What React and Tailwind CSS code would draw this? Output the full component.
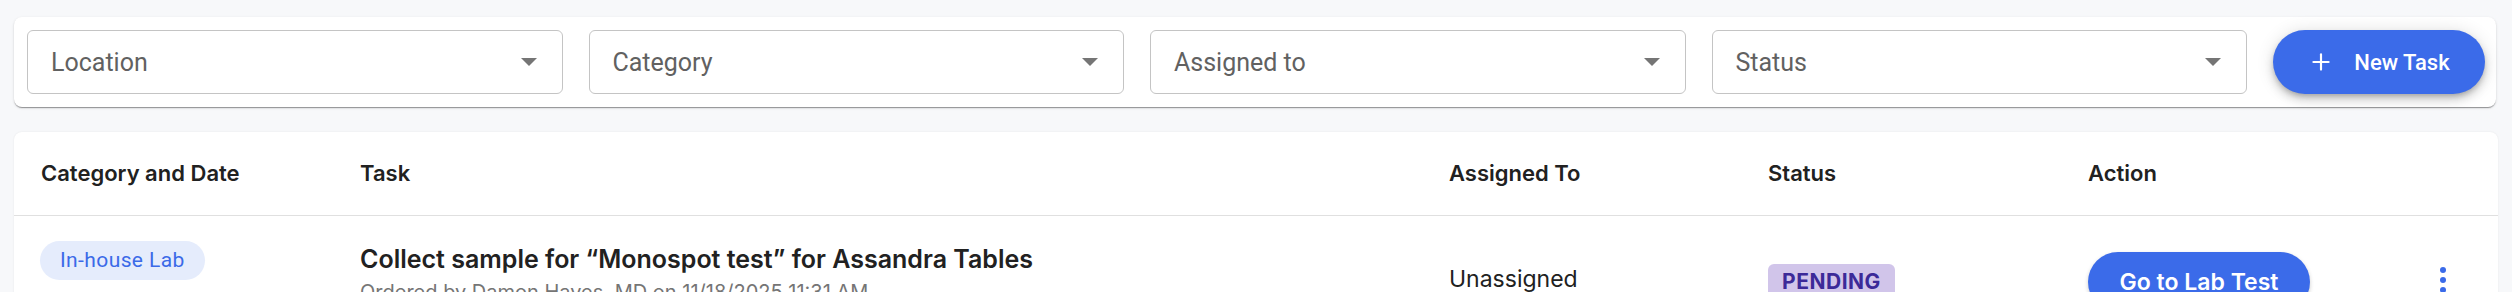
import { Plus } from "lucide-react";

const filters = ["Location", "Category", "Assigned to", "Status"];

function FilterSelect({ label }) {
  return (
    <button
      type="button"
      className="flex h-16 min-w-0 flex-1 items-center justify-between rounded-[6px] border border-[#c4c4c4] bg-white pl-[23px] pr-[25px] text-left"
    >
      <span className="text-[25px] leading-none text-[#616161] [font-family:Roboto,'Liberation_Sans',sans-serif]">
        {label}
      </span>
      <svg width="16" height="8" viewBox="0 0 16 8" className="shrink-0">
        <path d="M0 0 L16 0 L8 8 Z" fill="#757575" />
      </svg>
    </button>
  );
}

function TaskRow() {
  return (
    <div className="flex h-[132px] items-start">
      <div className="w-[346px] shrink-0 pl-[26px] pt-[25px]">
        <span className="inline-flex h-[39px] items-center rounded-full bg-[#e5ecfc] px-5 text-[21px] tracking-[0.4px] text-[#3b6ae8] [font-family:Roboto,'Liberation_Sans',sans-serif]">
          In-house Lab
        </span>
      </div>

      <div className="w-[1089px] shrink-0 pt-[27px]">
        <p className="text-[25px] font-semibold leading-8 text-[#212121]">
          Collect sample for “Monospot test” for Assandra Tables
        </p>
        <p className="mt-[3px] text-[20px] leading-7 text-[#757575]">
          Ordered by Damon Hayes, MD on 11/18/2025 11:31 AM
        </p>
      </div>

      <div className="w-[319px] shrink-0 pt-[47px]">
        <p className="text-[23px] leading-8 text-[#212121]">Unassigned</p>
      </div>

      <div className="w-[320px] shrink-0 pt-[48px]">
        <span className="inline-flex h-9 items-center rounded-[6px] bg-[#d1c5ea] px-[14px] text-[21px] font-bold tracking-wide text-[#3c2a98]">
          PENDING
        </span>
      </div>

      <div className="flex flex-1 items-start justify-between pr-[52px] pt-9">
        <button
          type="button"
          className="h-[60px] w-[222px] rounded-full bg-[#3b6be9] text-[23px] font-semibold text-white shadow-[0_2px_4px_rgba(0,0,0,0.2)]"
        >
          Go to Lab Test
        </button>
        <div className="mt-[15px] flex flex-col items-center gap-[4px]">
          <span className="h-[6px] w-[6px] rounded-full bg-[#3b6be9]" />
          <span className="h-[6px] w-[6px] rounded-full bg-[#3b6be9]" />
          <span className="h-[6px] w-[6px] rounded-full bg-[#3b6be9]" />
        </div>
      </div>
    </div>
  );
}

export default function App() {
  return (
    <div className="min-h-screen bg-[#f7f8fa] px-[14px] pt-[17px] [font-family:Inter,'Noto_Sans',sans-serif]">
      <div className="mr-[2px] flex items-center gap-[26px] rounded-[8px] bg-white py-[13px] pl-[13px] pr-[11px] shadow-[0_2px_1px_-1px_rgba(0,0,0,0.25),0_1px_1px_0_rgba(0,0,0,0.14),0_1px_3px_0_rgba(0,0,0,0.12)]">
        {filters.map((f) => (
          <FilterSelect key={f} label={f} />
        ))}
        <button
          type="button"
          className="flex h-16 w-[212px] shrink-0 items-center justify-center gap-[20px] rounded-full bg-[#3b6be9] text-white shadow-[0_3px_5px_-1px_rgba(0,0,0,0.2),0_6px_10px_0_rgba(0,0,0,0.14),0_1px_18px_0_rgba(0,0,0,0.12)]"
        >
          <Plus className="h-[26px] w-[26px]" strokeWidth={2} />
          <span className="text-[22px] font-medium [font-family:Roboto,'Liberation_Sans',sans-serif]">
            New Task
          </span>
        </button>
      </div>

      <div className="mt-[25px] rounded-t-[8px] bg-white shadow-[0_0_2px_rgba(0,0,0,0.08)]">
        <div className="flex h-[84px] items-center border-b border-[#e0e0e0] text-[22px] font-semibold text-[#212121]">
          <div className="w-[346px] shrink-0 pl-[27px]">Category and Date</div>
          <div className="w-[1089px] shrink-0">Task</div>
          <div className="w-[319px] shrink-0">Assigned To</div>
          <div className="w-[320px] shrink-0">Status</div>
          <div className="flex-1">Action</div>
        </div>
        <TaskRow />
      </div>
    </div>
  );
}
